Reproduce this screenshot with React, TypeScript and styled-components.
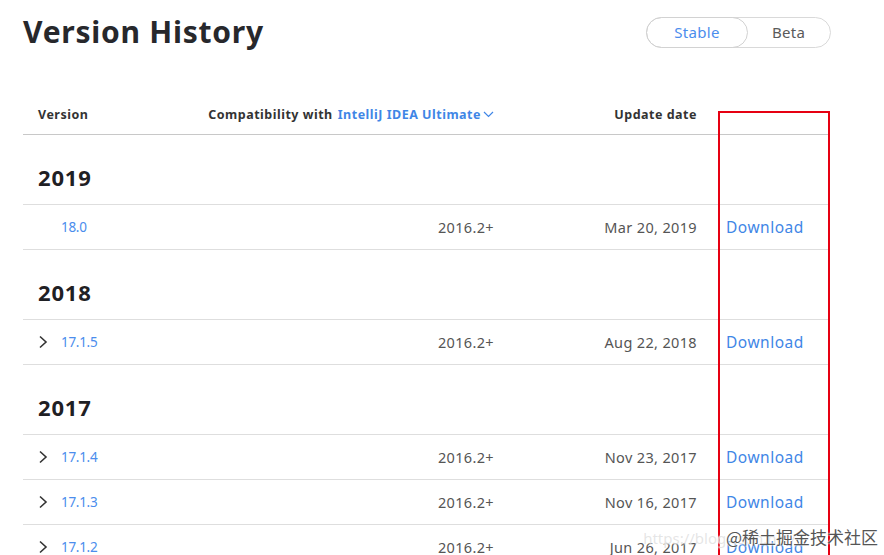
import React from 'react'
import styled, { createGlobalStyle } from 'styled-components';

type Release = { version: string; compat: string; date: string; expandable: boolean }
type YearGroup = { year: string; releases: Release[] }

const groups: YearGroup[] = [
  { year: '2019', releases: [{ version: '18.0', compat: '2016.2+', date: 'Mar 20, 2019', expandable: false }] },
  { year: '2018', releases: [{ version: '17.1.5', compat: '2016.2+', date: 'Aug 22, 2018', expandable: true }] },
  {
    year: '2017',
    releases: [
      { version: '17.1.4', compat: '2016.2+', date: 'Nov 23, 2017', expandable: true },
      { version: '17.1.3', compat: '2016.2+', date: 'Nov 16, 2017', expandable: true },
      { version: '17.1.2', compat: '2016.2+', date: 'Jun 26, 2017', expandable: true },
    ],
  },
]

const Chevron = () => (
  <svg width="10" height="14" viewBox="0 0 10 14" fill="none">
    <path d="M2 1.5L8 7L2 12.5" stroke="#333" strokeWidth="1.6" />
  </svg>
)

const App = () => {
  return (
    <>
      <GlobalStyle />
      <Page>
        <TopBar>
          <Title>Version History</Title>
          <Toggle>
            <ToggleItem active>Stable</ToggleItem>
            <ToggleItem>Beta</ToggleItem>
          </Toggle>
        </TopBar>

        <Table>
          <HeaderRow>
            <HeadCell>Version</HeadCell>
            <HeadCell align="right">
              Compatibility with <Product>IntelliJ IDEA Ultimate</Product>
              <DropIcon width="11" height="7" viewBox="0 0 11 7" fill="none">
                <path d="M1 1L5.5 5.5L10 1" stroke="#3f86e6" strokeWidth="1.2" />
              </DropIcon>
            </HeadCell>
            <HeadCell align="right">Update date</HeadCell>
            <HeadCell />
          </HeaderRow>

          {groups.map((g) => (
            <React.Fragment key={g.year}>
              <YearRow>{g.year}</YearRow>
              {g.releases.map((r) => (
                <DataRow key={r.version}>
                  <VersionCell>
                    <Arrow>{r.expandable && <Chevron />}</Arrow>
                    <VersionLink>{r.version}</VersionLink>
                  </VersionCell>
                  <Cell align="right">{r.compat}</Cell>
                  <Cell align="right">{r.date}</Cell>
                  <DownloadCell>Download</DownloadCell>
                </DataRow>
              ))}
            </React.Fragment>
          ))}
        </Table>

        <RedFrame />
        <Watermark>
          <Faint>https://blog.csdn.net/</Faint>@稀土掘金技术社区
        </Watermark>
      </Page>
    </>
  )
}

export default App

const GlobalStyle = createGlobalStyle`
  html, body {
    margin: 0;
    padding: 0;
    background: #fff;
    overflow: hidden;
  }
  body {
    font-family: "Noto Sans", "DejaVu Sans", sans-serif;
    color: #27282c;
  }
`;

const Page = styled.div`
  position: relative;
  width: 884px;
  height: 555px;
  padding: 12px 0 0 23px;
  box-sizing: border-box;
  overflow: hidden;
`;

const TopBar = styled.div`
  display: flex;
  justify-content: space-between;
  align-items: center;
  width: 808px;
  height: 40px;
  margin-bottom: 43px;
`;

const Title = styled.h1`
  margin: 0;
  font-size: 30px;
  font-weight: 700;
  letter-spacing: 0.75px;
  color: #27282c;
  line-height: 40px;
`;

const Toggle = styled.div`
  display: flex;
  height: 31px;
  width: 185px;
  border: 1px solid #d9d9d9;
  border-radius: 16px;
  box-sizing: border-box;
`;

const ToggleItem = styled.div<{ active?: boolean }>`
  flex: ${(p) => (p.active ? '0 0 100px' : '1')};
  display: flex;
  align-items: center;
  justify-content: center;
  margin: -1px 0 -1px -1px;
  border: 1px solid ${(p) => (p.active ? '#d2d2d2' : 'transparent')};
  border-radius: 16px;
  font-size: 15px;
  letter-spacing: 0.3px;
  color: ${(p) => (p.active ? '#4b8ded' : '#5a5a5a')};
`;

const Table = styled.div`
  width: 807px;
`;

const columns = `
  display: grid;
  grid-template-columns: 277px 194px 203px 1fr;
  align-items: center;
`;

const HeaderRow = styled.div`
  ${columns}
  height: 39px;
  border-bottom: 1px solid #c8c8c8;
`;

const HeadCell = styled.div<{ align?: string }>`
  display: flex;
  align-items: center;
  justify-content: ${(p) => (p.align === 'right' ? 'flex-end' : 'flex-start')};
  padding-left: 15px;
  font-size: 12.5px;
  font-weight: 700;
  letter-spacing: 0.5px;
  color: #333;
  white-space: nowrap;
`;

const Product = styled.span`
  color: #3f86e6;
  margin-left: 5px;
`;

const DropIcon = styled.svg`
  flex-shrink: 0;
  margin-left: 2px;
`;

const YearRow = styled.div`
  padding: 30px 0 14px 15px;
  line-height: 25px;
  font-size: 22px;
  font-weight: 700;
  letter-spacing: 0.8px;
  color: #1f2024;
  border-bottom: 1px solid #dedede;
`;

const DataRow = styled.div`
  ${columns}
  height: 44px;
  border-bottom: 1px solid #dedede;
`;

const Cell = styled.div<{ align?: string }>`
  text-align: ${(p) => p.align || 'left'};
  font-size: 14.5px;
  letter-spacing: 0.35px;
  color: #555;
  white-space: nowrap;
`;

const VersionCell = styled.div`
  display: flex;
  align-items: center;
  padding-left: 15px;
`;

const Arrow = styled.span`
  display: inline-flex;
  width: 23px;
`;

const VersionLink = styled.span`
  font-size: 13.5px;
  letter-spacing: -0.3px;
  color: #4b8ded;
`;

const DownloadCell = styled.div`
  padding-left: 29px;
  font-size: 15.5px;
  letter-spacing: 0.5px;
  color: #3f86e6;
`;

const RedFrame = styled.div`
  position: absolute;
  left: 718px;
  top: 111px;
  width: 108px;
  height: 460px;
  border: 2px solid #e60012;
`;

const Watermark = styled.div`
  position: absolute;
  right: 6px;
  bottom: 6px;
  font-family: "Noto Sans CJK SC", sans-serif;
  font-size: 17px;
  color: #555;
  text-shadow: 0 0 2px #fff, 0 0 2px #fff;
  white-space: nowrap;
`;

const Faint = styled.span`
  color: rgba(180, 180, 180, 0.35);
  font-family: "Noto Sans", sans-serif;
  font-size: 15px;
  margin-right: -70px;
`;
